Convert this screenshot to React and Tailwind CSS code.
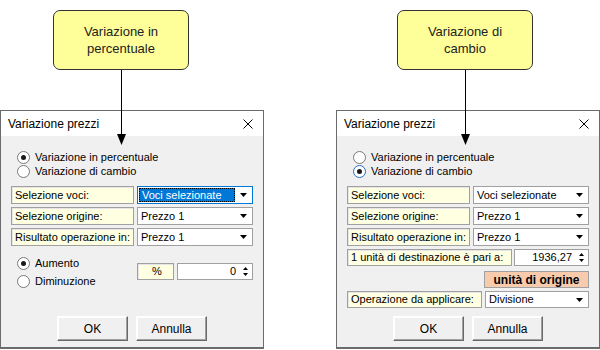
import React from "react";

const Radio = ({ label, checked, focused }) => (
  <div className="flex items-center h-[14px]">
    <span
      className={`w-[13px] h-[13px] rounded-full bg-white flex items-center justify-center border ${
        focused ? "border-[#2a6fb8]" : "border-[#7a7a7a]"
      }`}
    >
      {checked && <span className="w-[5px] h-[5px] rounded-full bg-[#1a1a1a]" />}
    </span>
    <span className="ml-[5px] text-[11px] leading-none text-black">{label}</span>
  </div>
);

const LabelBox = ({ children, className = "" }) => (
  <div
    className={`flex items-center pl-[3px] bg-[#ffffe1] border border-[#a0a0a0] shadow-[inset_1px_1px_0_#e6e6e6] text-[11px] text-black whitespace-nowrap ${className}`}
  >
    {children}
  </div>
);

const DownArrow = () => (
  <svg width="7" height="4" viewBox="0 0 7 4">
    <polygon points="0,0 7,0 3.5,4" fill="#000" />
  </svg>
);

const Combo = ({ value, focused, className = "" }) => (
  <div
    className={`flex items-center bg-white border text-[11px] ${
      focused ? "border-[#0078d7]" : "border-[#a0a0a0]"
    } ${className}`}
  >
    {focused ? (
      <div className="flex-1 ml-[1px] h-[14px] flex items-center pl-[2px] bg-[#0078d7] text-white border border-dotted border-black">
        {value}
      </div>
    ) : (
      <div className="flex-1 pl-[3px] text-black">{value}</div>
    )}
    <div className="w-[17px] h-full flex items-center justify-center">
      <DownArrow />
    </div>
  </div>
);

const Spin = ({ value, className = "" }) => (
  <div className={`flex items-center bg-white border border-[#a0a0a0] text-[11px] text-black ${className}`}>
    <div className="flex-1 text-right pr-[2px]">{value}</div>
    <div className="w-[14px] flex flex-col items-center gap-[3px]">
      <svg width="5" height="3" viewBox="0 0 5 3">
        <polygon points="0,3 5,3 2.5,0" fill="#000" />
      </svg>
      <svg width="5" height="3" viewBox="0 0 5 3">
        <polygon points="0,0 5,0 2.5,3" fill="#000" />
      </svg>
    </div>
  </div>
);

const Button = ({ children }) => (
  <div className="w-[71px] h-[25px] flex items-center justify-center bg-[#f0f0f0] border border-t-white border-l-white border-r-[#696969] border-b-[#696969] shadow-[inset_-1px_-1px_0_#a0a0a0,inset_1px_1px_0_#fff] text-[12px] text-black">
    {children}
  </div>
);

const Dialog = ({ children }) => (
  <div className="w-[264px] h-[239px] flex flex-col border border-b-2 border-[#6b6b6b] bg-[#f0f0f0]">
    <div className="h-[25px] bg-white flex items-center justify-between pl-[7px] pr-[10px]">
      <span className="text-[12px] text-black">Variazione prezzi</span>
      <svg width="10" height="10" viewBox="0 0 10 10">
        <path d="M0.5 0.5 L9.5 9.5 M9.5 0.5 L0.5 9.5" stroke="#000" strokeWidth="1" />
      </svg>
    </div>
    <div className="flex-1 flex flex-col px-[10px]">
      {children}
      <div className="mt-auto mb-[6px] flex gap-[8px] pl-[46px]">
        <Button>OK</Button>
        <Button>Annulla</Button>
      </div>
    </div>
  </div>
);

const Note = ({ lines, className = "" }) => (
  <div
    className={`w-[136px] h-[60px] rounded-[7px] border border-[#333] bg-[#ffff99] flex flex-col items-center justify-center text-[13px] leading-[17px] text-[#222] ${className}`}
  >
    {lines.map((l) => (
      <span key={l}>{l}</span>
    ))}
  </div>
);

const Rows = ({ focusFirst }) => (
  <>
    <div className="mt-[8px] flex gap-[3px] h-[18px]">
      <LabelBox className="w-[123px]">Selezione voci:</LabelBox>
      <Combo className="w-[116px]" value="Voci selezionate" focused={focusFirst} />
    </div>
    <div className="mt-[3px] flex gap-[3px] h-[18px]">
      <LabelBox className="w-[123px]">Selezione origine:</LabelBox>
      <Combo className="w-[116px]" value="Prezzo 1" />
    </div>
    <div className="mt-[3px] flex gap-[3px] h-[18px]">
      <LabelBox className="w-[123px]">Risultato operazione in:</LabelBox>
      <Combo className="w-[116px]" value="Prezzo 1" />
    </div>
  </>
);

export default function App() {
  return (
    <div className="relative w-[600px] h-[350px] bg-white overflow-hidden font-['Liberation_Sans',Arial,sans-serif]">
      <div className="flex justify-between">
        {/* left: percentuale */}
        <div className="flex flex-col pt-[10px]">
          <Note className="ml-[53px]" lines={["Variazione in", "percentuale"]} />
          <div className="mt-[40px]">
            <Dialog>
              <div className="pt-[14px] pl-[6px] flex flex-col">
                <Radio label="Variazione in percentuale" checked />
                <Radio label="Variazione di cambio" />
              </div>
              <Rows focusFirst />
              <div className="flex mt-[10px]">
                <div className="w-[126px] pl-[6px] flex flex-col gap-[4px]">
                  <Radio label="Aumento" checked />
                  <Radio label="Diminuzione" />
                </div>
                <div className="mt-[7px] flex gap-[3px] h-[17px]">
                  <LabelBox className="w-[37px] justify-center pl-0">%</LabelBox>
                  <Spin className="w-[76px]" value="0" />
                </div>
              </div>
            </Dialog>
          </div>
        </div>

        {/* right: cambio */}
        <div className="flex flex-col pt-[10px]">
          <Note className="ml-[61px]" lines={["Variazione di", "cambio"]} />
          <div className="mt-[40px]">
            <Dialog>
              <div className="pt-[14px] pl-[6px] flex flex-col">
                <Radio label="Variazione in percentuale" />
                <Radio label="Variazione di cambio" checked focused />
              </div>
              <Rows />
              <div className="mt-[3px] flex gap-[2px] h-[17px]">
                <LabelBox className="w-[165px]">1 unità di destinazione è pari a:</LabelBox>
                <Spin className="w-[75px]" value="1936,27" />
              </div>
              <div className="mt-[5px] flex justify-end h-[17px]">
                <div className="w-[105px] flex items-center justify-center bg-[#f8cbad] border border-[#a0a0a0] text-[12px] font-bold text-black">
                  unità di origine
                </div>
              </div>
              <div className="mt-[3px] flex gap-[3px] h-[17px]">
                <LabelBox className="w-[135px]">Operazione da applicare:</LabelBox>
                <Combo className="w-[104px]" value="Divisione" />
              </div>
            </Dialog>
          </div>
        </div>
      </div>

      {/* connector arrows */}
      <svg className="absolute inset-0 pointer-events-none" width="600" height="350" viewBox="0 0 600 350">
        <line x1="121.5" y1="70" x2="121.5" y2="136" stroke="#000" strokeWidth="1" />
        <polygon points="117,134 126,134 121.5,145" fill="#000" />
        <line x1="465.5" y1="70" x2="465.5" y2="136" stroke="#000" strokeWidth="1" />
        <polygon points="461,134 470,134 465.5,145" fill="#000" />
      </svg>
    </div>
  );
}
